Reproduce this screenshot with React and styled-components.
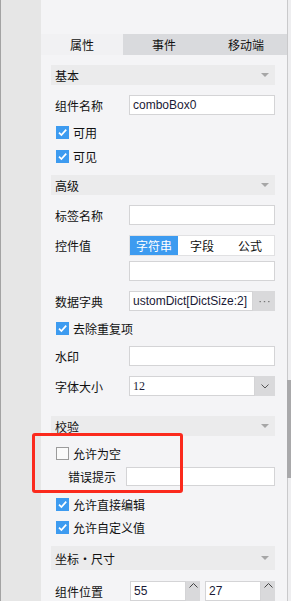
import styled, { createGlobalStyle } from "styled-components";

const GlobalStyle = createGlobalStyle`
  html, body {
    margin: 0;
    padding: 0;
  }
  body {
    width: 291px;
    height: 601px;
    overflow: hidden;
    background: #f4f4f6;
    font-family: "Noto Sans CJK SC", "Liberation Sans", sans-serif;
    font-size: 12px;
    color: #111;
  }
`;

const Screen = styled.div`
  position: relative;
  display: flex;
  width: 291px;
  height: 601px;
  overflow: hidden;
`;

const LeftStrip = styled.div`
  flex-shrink: 0;
  width: 40px;
  border-left: 1px solid #a3a3a3;
  background: #e6e6e6;
`;

const Panel = styled.div`
  flex-shrink: 0;
  width: 246px;
  display: flex;
  flex-direction: column;
  background: #f4f4f6;
`;

const TopSpace = styled.div`
  height: 38px;
`;

const Tabs = styled.div`
  display: flex;
  height: 24px;
`;

const Tab = styled.div`
  flex: 1;
  display: flex;
  align-items: center;
  justify-content: center;
  background: ${(p) => (p.$active ? "#f1f1f3" : "#d9dadd")};
  color: #111;
`;

const Content = styled.div`
  display: flex;
  flex-direction: column;
  padding: 0 12px 0 10px;
`;

const Header = styled.div`
  display: flex;
  align-items: center;
  justify-content: space-between;
  height: ${(p) => p.$h || 20}px;
  margin-top: ${(p) => p.$mt}px;
  padding: 0 6px 0 4px;
  background: #ebebec;
  color: #111;
`;

const Caret = styled.span`
  width: 0;
  height: 0;
  border-left: 4px solid transparent;
  border-right: 4px solid transparent;
  border-top: 4px solid #a6a6a6;
`;

const CheckRow = styled.div`
  display: flex;
  align-items: center;
  gap: 4px;
  height: 13px;
  margin-top: ${(p) => p.$mt}px;
  padding-left: 5px;
  line-height: 13px;
`;

const Box = styled.span`
  display: flex;
  align-items: center;
  justify-content: center;
  width: 13px;
  height: 13px;
  box-sizing: border-box;
  background: ${(p) => (p.$on ? "#3d9bf0" : "#fafafa")};
  border: ${(p) => (p.$on ? "none" : "1px solid #9b9b9b")};
`;

const FieldRow = styled.div`
  display: flex;
  align-items: ${(p) => (p.$top ? "flex-start" : "center")};
  height: ${(p) => p.$h || 20}px;
  margin-top: ${(p) => p.$mt}px;
`;

const Label = styled.div`
  flex-shrink: 0;
  box-sizing: border-box;
  width: ${(p) => p.$w || 78}px;
  padding-left: ${(p) => p.$indent || 4}px;
  height: ${(p) => (p.$top ? "21px" : "auto")};
  display: flex;
  align-items: center;
  color: #111;
`;

const Input = styled.div`
  flex: ${(p) => (p.$block ? "none" : "1")};
  min-width: 0;
  height: ${(p) => p.$h || 20}px;
  box-sizing: border-box;
  display: flex;
  align-items: center;
  overflow: hidden;
  white-space: nowrap;
  padding-left: 3px;
  background: #fff;
  border: 1px solid #d4d4d6;
  font-family: ${(p) =>
    p.$serif ? '"Liberation Serif", serif' : '"Liberation Sans", Arial, sans-serif'};
  font-size: 12px;
  color: #1a1a36;
`;

const Joined = styled.div`
  flex: 1;
  display: flex;
  height: 20px;
`;

const SideButton = styled.div`
  flex-shrink: 0;
  width: ${(p) => p.$w}px;
  display: flex;
  align-items: ${(p) => (p.$top ? "flex-start" : "center")};
  justify-content: center;
  padding-top: ${(p) => (p.$top ? "2px" : "0")};
  box-sizing: border-box;
  background: #d9d9db;
`;

const Stack = styled.div`
  flex: 1;
  display: flex;
  flex-direction: column;
  gap: 5px;
`;

const Segmented = styled.div`
  display: flex;
  height: 21px;
  box-sizing: border-box;
  border: 1px solid #e1e1e3;
  background: #fff;
`;

const Segment = styled.div`
  flex: 1;
  display: flex;
  align-items: center;
  justify-content: center;
  background: ${(p) => (p.$active ? "#3d9bf0" : "transparent")};
  color: ${(p) => (p.$active ? "#fff" : "#111")};
`;

const SpinPair = styled.div`
  flex: 1;
  display: flex;
  gap: 5px;
  height: 20px;
`;

const Scrollbar = styled.div`
  flex-shrink: 0;
  width: 3px;
  border-left: 1px solid #c9c9cb;
  background: #eeeef0;
`;

const Thumb = styled.div`
  margin-top: 380px;
  margin-left: -1px;
  width: 4px;
  height: 98px;
  background: #a9a9ab;
`;

const Highlight = styled.div`
  position: absolute;
  left: 32px;
  top: 433px;
  width: 151px;
  height: 60px;
  box-sizing: border-box;
  border: 3px solid #fb2a1d;
  border-radius: 3px;
  pointer-events: none;
`;

const Check = ({ on }) => (
  <Box $on={on}>
    {on && (
      <svg width="11" height="11" viewBox="0 0 11 11">
        <path
          d="M2 5.6 L4.4 8 L9.2 2.6"
          fill="none"
          stroke="#fff"
          strokeWidth="1.7"
        />
      </svg>
    )}
  </Box>
);

const Chevron = () => (
  <svg width="8" height="5" viewBox="0 0 8 5">
    <path d="M0.5 0.5 L4 4 L7.5 0.5" fill="none" stroke="#555" strokeWidth="1" />
  </svg>
);

const UpCaret = () => (
  <svg width="9" height="5" viewBox="0 0 9 5">
    <path d="M0.5 4.5 L4.5 0.5 L8.5 4.5" fill="none" stroke="#444" strokeWidth="1" />
  </svg>
);

const Dots = () => (
  <svg width="11" height="3" viewBox="0 0 11 3">
    <rect x="0.5" y="1" width="1.4" height="1.2" fill="#777" />
    <rect x="4.8" y="1" width="1.4" height="1.2" fill="#777" />
    <rect x="9.1" y="1" width="1.4" height="1.2" fill="#777" />
  </svg>
);

const SpinInput = ({ value }) => (
  <Joined>
    <Input>{value}</Input>
    <SideButton $w={14} $top>
      <UpCaret />
    </SideButton>
  </Joined>
);

export default function App() {
  return (
    <Screen>
      <GlobalStyle />
      <LeftStrip />
      <Panel>
        <TopSpace />
        <Tabs>
          <Tab $active>属性</Tab>
          <Tab>事件</Tab>
          <Tab>移动端</Tab>
        </Tabs>
        <Content>
          <Header $mt={10}>
            基本
            <Caret />
          </Header>
          <FieldRow $mt={10}>
            <Label>组件名称</Label>
            <Input>comboBox0</Input>
          </FieldRow>
          <CheckRow $mt={11}>
            <Check on />
            可用
          </CheckRow>
          <CheckRow $mt={11}>
            <Check on />
            可见
          </CheckRow>

          <Header $mt={12}>
            高级
            <Caret />
          </Header>
          <FieldRow $mt={10}>
            <Label>标签名称</Label>
            <Input />
          </FieldRow>
          <FieldRow $mt={10} $h={46} $top>
            <Label $top>控件值</Label>
            <Stack>
              <Segmented>
                <Segment $active>字符串</Segment>
                <Segment>字段</Segment>
                <Segment>公式</Segment>
              </Segmented>
              <Input $block />
            </Stack>
          </FieldRow>
          <FieldRow $mt={10}>
            <Label>数据字典</Label>
            <Joined>
              <Input>ustomDict[DictSize:2]</Input>
              <SideButton $w={22}>
                <Dots />
              </SideButton>
            </Joined>
          </FieldRow>
          <CheckRow $mt={11}>
            <Check on />
            去除重复项
          </CheckRow>
          <FieldRow $mt={11}>
            <Label>水印</Label>
            <Input />
          </FieldRow>
          <FieldRow $mt={10}>
            <Label>字体大小</Label>
            <Joined>
              <Input $serif>12</Input>
              <SideButton $w={20}>
                <Chevron />
              </SideButton>
            </Joined>
          </FieldRow>

          <Header $mt={20}>
            校验
            <Caret />
          </Header>
          <CheckRow $mt={11}>
            <Check />
            允许为空
          </CheckRow>
          <FieldRow $mt={7} $h={19}>
            <Label $w={75} $indent={17}>
              错误提示
            </Label>
            <Input $h={19} />
          </FieldRow>
          <CheckRow $mt={12}>
            <Check on />
            允许直接编辑
          </CheckRow>
          <CheckRow $mt={10}>
            <Check on />
            允许自定义值
          </CheckRow>

          <Header $mt={12} $h={24}>
            坐标・尺寸
            <Caret />
          </Header>
          <FieldRow $mt={11}>
            <Label $w={79}>组件位置</Label>
            <SpinPair>
              <SpinInput value="55" />
              <SpinInput value="27" />
            </SpinPair>
          </FieldRow>
        </Content>
      </Panel>
      <Scrollbar>
        <Thumb />
      </Scrollbar>
      <Highlight />
    </Screen>
  );
}
